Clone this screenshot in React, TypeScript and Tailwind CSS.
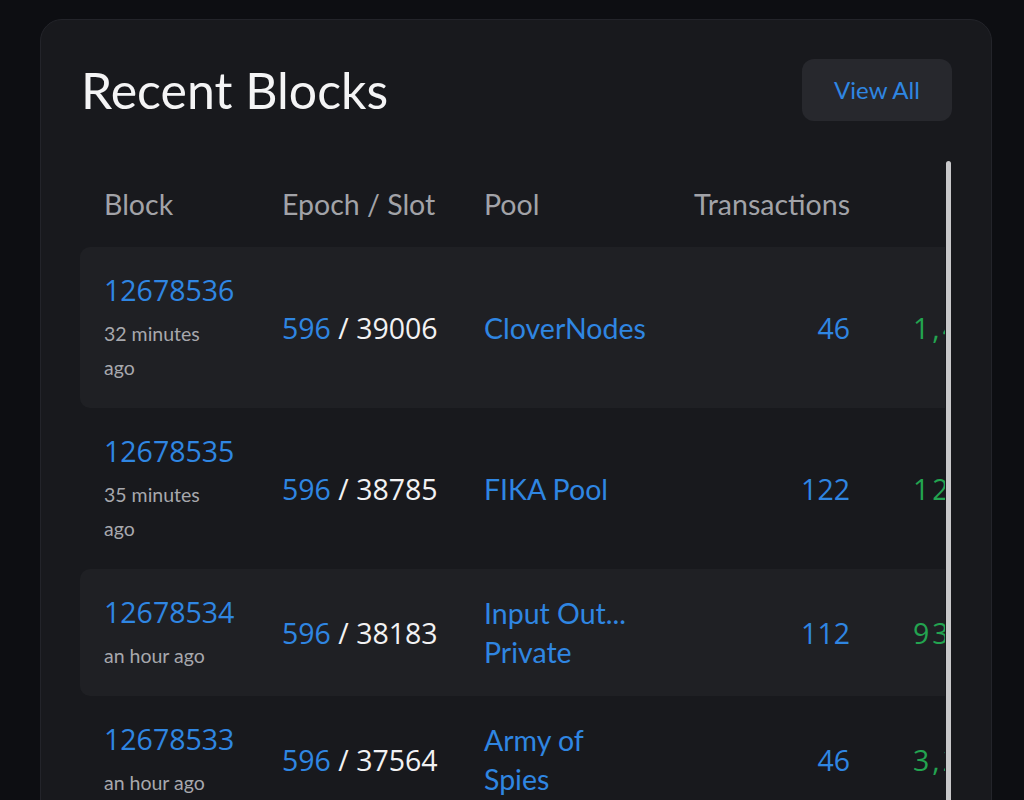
import React from "react";

type Block = {
	height: string;
	age: string;
	epoch: string;
	slot: string;
	pool: string[];
	txs: string;
	output: string;
	striped: boolean;
};

const blocks: Block[] = [
	{ height: "12678536", age: "32 minutes ago", epoch: "596", slot: "39006", pool: ["CloverNodes"], txs: "46", output: "1,482.35 ₳", striped: true },
	{ height: "12678535", age: "35 minutes ago", epoch: "596", slot: "38785", pool: ["FIKA Pool"], txs: "122", output: "12,908.11 ₳", striped: false },
	{ height: "12678534", age: "an hour ago", epoch: "596", slot: "38183", pool: ["Input Out...", "Private"], txs: "112", output: "93,441.02 ₳", striped: true },
	{ height: "12678533", age: "an hour ago", epoch: "596", slot: "37564", pool: ["Army of Spies"], txs: "46", output: "3,205.77 ₳", striped: false },
];

const label = "font-['Lato','Noto_Sans',sans-serif]";
const mono = "font-['Open_Sans','Noto_Sans',sans-serif]";
const cols = "grid grid-cols-[178px_202px_210px_204px_1fr]";

const App = () => {
	return (
		<div className="min-h-screen bg-[#0d0e12] pt-[19px] pl-10 pr-8">
			<div className="rounded-[22px] border border-[#23242a] bg-[#18191d] px-[39px] pt-[39px] h-[820px] overflow-hidden">
				{/*Title && View All*/}
				<div className="flex items-center justify-between">
					<h2 className={`${label} text-[50px] font-normal text-[#f4f4f5] leading-[62px] pl-px`}>
						Recent Blocks
					</h2>
					<button className={`${label} h-[62px] w-[150px] rounded-[12px] bg-[#27282d] text-[24px] text-[#2f86e2]`}>
						View All
					</button>
				</div>
				{/*Table*/}
				<div className="mt-10 flex">
					<div className="flex-1 overflow-hidden">
						<div className="w-[1100px]">
							<div className={`${cols} ${label} text-[28.5px] text-[#a2a3a8] leading-[30px] py-7`}>
								<div className="px-6">Block</div>
								<div className="px-6">Epoch / Slot</div>
								<div className="px-6">Pool</div>
								<div className="px-6 text-right">Transactions</div>
								<div className="px-6" />
							</div>
							{blocks.map((b) => (
								<div
									key={b.height}
									className={`${cols} items-center rounded-[10px] pt-6 pb-[23px] ${b.striped ? "bg-[#1f2024]" : ""}`}
								>
									<div className="px-6">
										<div className={`${mono} text-[28.5px] leading-[38px] text-[#2f86e2]`}>
											{b.height}
										</div>
										<div className={`${label} mt-2 text-[19.5px] leading-[34px] text-[#a7a8ad]`}>
											{b.age}
										</div>
									</div>
									<div className={`${mono} px-6 whitespace-nowrap text-[28.5px] leading-[38px] text-[#f2f2f3]`}>
										<span className="text-[#2f86e2]">{b.epoch}</span> / {b.slot}
									</div>
									<div className={`${label} px-6 text-[28.5px] leading-[39px] text-[#2f86e2]`}>
										{b.pool.map((p) => (
											<div key={p}>{p}</div>
										))}
									</div>
									<div className={`${mono} px-6 text-right text-[28.5px] leading-[38px] text-[#2f86e2]`}>
										{b.txs}
									</div>
									<div className={`${mono} px-6 pl-[39px] whitespace-nowrap text-[28.5px] leading-[38px] tracking-[3px] text-[#23a450]`}>
										{b.output}
									</div>
								</div>
							))}
						</div>
					</div>
					<div className="w-[7px] flex justify-center">
						<div className="w-[5px] h-[700px] rounded-full bg-[#c8c8ca]" />
					</div>
				</div>
			</div>
		</div>
	);
};

export default App;
